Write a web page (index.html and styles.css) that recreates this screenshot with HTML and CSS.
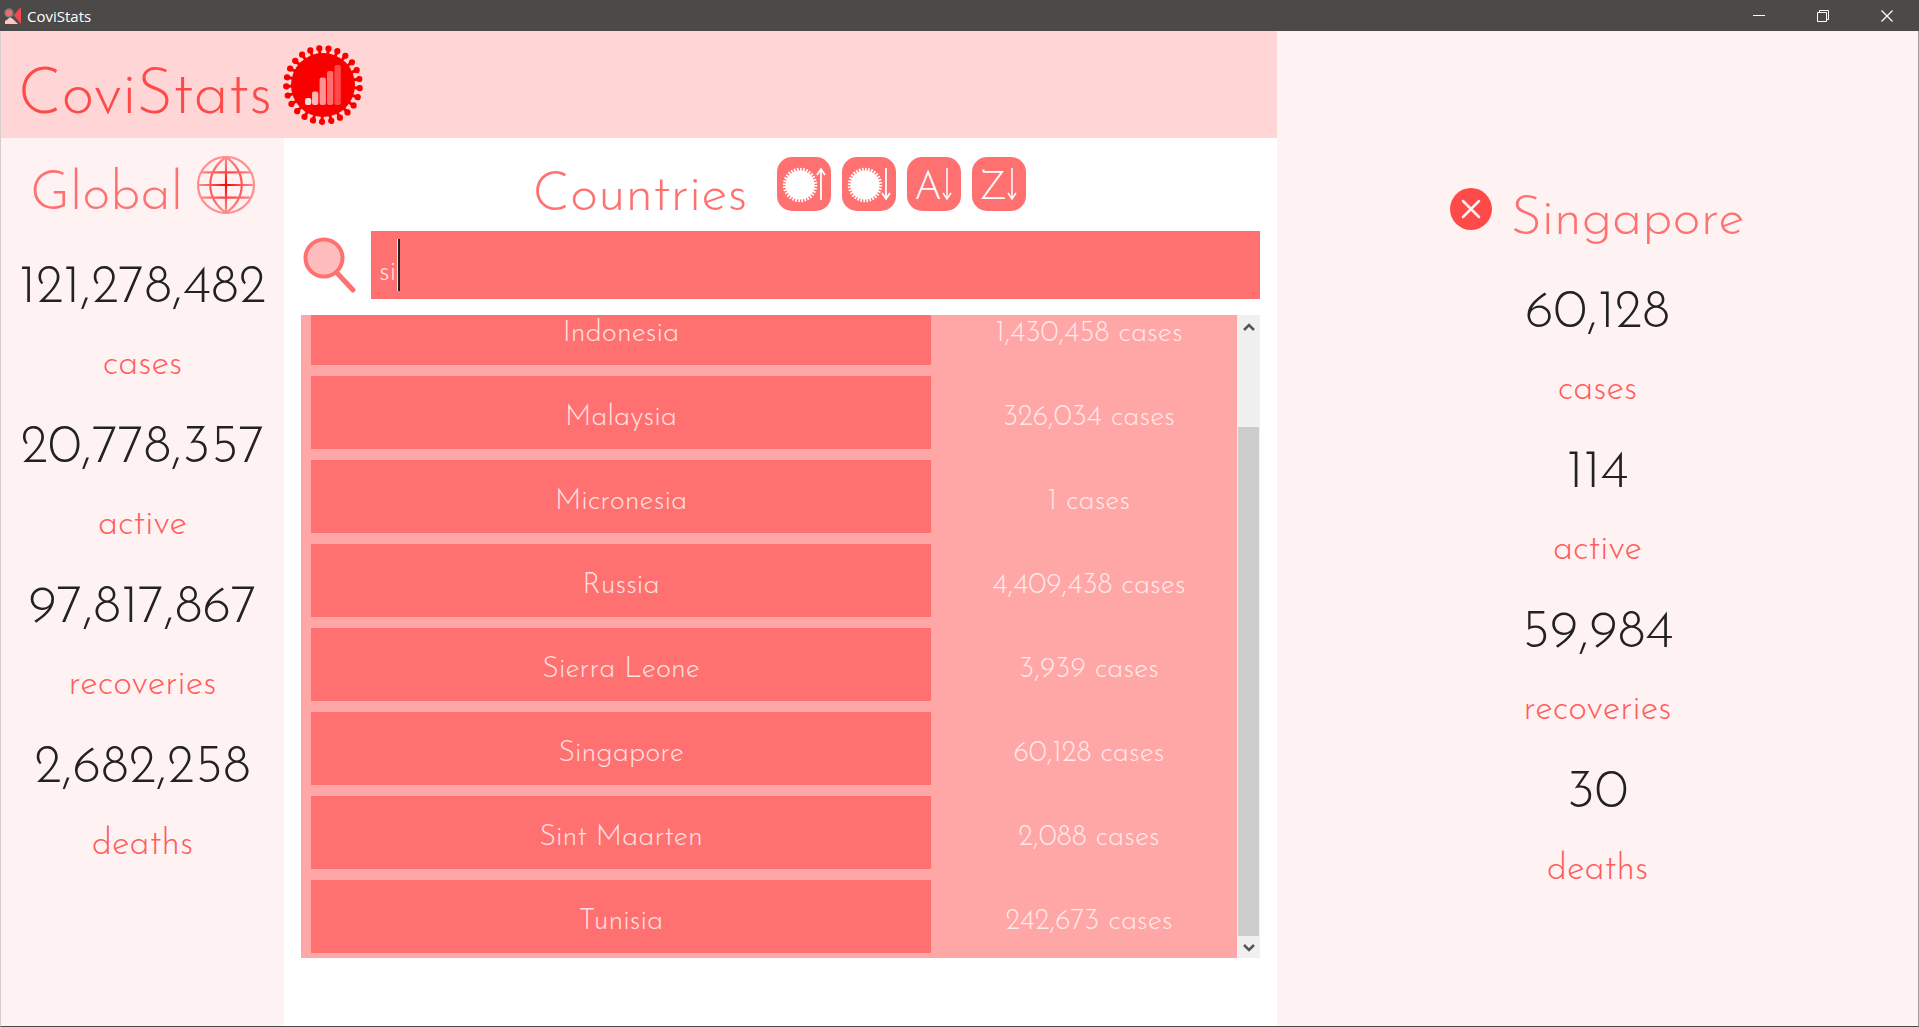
FILE: index.html
```html
<!DOCTYPE html>
<html lang="en">
<head>
<meta charset="utf-8">
<title>CoviStats</title>
<link rel="stylesheet" href="styles.css">
</head>
<body>
<div class="titlebar">
  <svg class="app-icon" width="18" height="18" viewBox="0 0 18 18" aria-hidden="true">
    <path d="M17 0v17L9 9z" fill="#f04a50"/><path d="M1 17v-3l3-2 2-2 3 2 5 5z" fill="#ffc4c4"/>
    <path d="M8 8l7 8" stroke="#5a4a4a" stroke-width="2"/>
    <circle cx="5" cy="6" r="4" fill="#f06c70" stroke="#5c8583" stroke-width="1.5"/>
  </svg>
  <span class="app-name">CoviStats</span>
  <div class="window-buttons">
    <button type="button" aria-label="Minimize"><svg width="12" height="12"><path d="M0 5.5h12" stroke="#fff"/></svg></button>
    <button type="button" aria-label="Restore"><svg width="12" height="12" fill="none" stroke="#fff"><path d="M.5 2.500h9v9h-9zM2.500 2.500v-2h9v9h-2"/></svg></button>
    <button type="button" aria-label="Close"><svg width="12" height="12"><path d="M.5.5l11 11M11.500.5l-11 11" stroke="#fff" stroke-width="1.3"/></svg></button>
  </div>
</div>
<div class="app">
  <header class="brand">
    <h1>CoviStats</h1>
    <svg width="80" height="80" viewBox="0 0 80 80" aria-hidden="true">
      <g transform="rotate(5 40 40)" fill="none" stroke="#f80000">
        <circle cx="40" cy="40" r="36.800" stroke-width="6.200" stroke-linecap="round" pathLength="25" stroke-dasharray="0 1"/>
        <circle cx="40" cy="40" r="33" stroke-width="6" pathLength="25" stroke-dasharray=".36 .64" stroke-dashoffset=".18"/>
      </g>
      <circle cx="40" cy="40" r="32" fill="#f80000"/>
      <rect x="22" y="53" width="6.300" height="7" rx="2" fill="#ffdada"/>
      <rect x="29" y="46.500" width="6.300" height="13.500" rx="2" fill="#ffb6b6"/>
      <rect x="36.600" y="32.500" width="6.300" height="27.500" rx="2" fill="#ff9292"/>
      <rect x="44" y="26" width="6.300" height="34" rx="2" fill="#ff6e6e"/>
      <rect x="51.500" y="20" width="6.300" height="40" rx="2" fill="#ff4848"/>
    </svg>
  </header>

  <aside class="panel global">
    <div class="panel-heading">
      <h2>Global</h2>
      <svg width="58" height="58" viewBox="0 0 58 58" fill="none" stroke="url(#globe)" stroke-width="2.200" aria-hidden="true">
        <defs><radialGradient id="globe" gradientUnits="userSpaceOnUse" cx="29" cy="29" r="29"><stop offset="0" stop-color="#f00"/><stop offset=".6" stop-color="#ff6262"/><stop offset="1" stop-color="#ff9494"/></radialGradient></defs>
        <circle cx="29" cy="29" r="28"/>
        <path d="M29 1v56M1 29h56M5 16.300h48M5 41.700h48M29 1C8 16 8 42 29 57M29 1c21 15 21 41 0 56"/>
      </svg>
    </div>
    <dl class="stats">
      <div><dd>121,278,482</dd><dt>cases</dt></div>
      <div><dd>20,778,357</dd><dt>active</dt></div>
      <div><dd>97,817,867</dd><dt>recoveries</dt></div>
      <div><dd>2,682,258</dd><dt>deaths</dt></div>
    </dl>
  </aside>

  <main class="countries">
    <div class="countries-heading">
      <h2>Countries</h2>
      <div class="sorts">
        <button type="button" aria-label="Sort by cases, ascending"><svg width="54" height="54" fill="none" stroke="#fff"><circle cx="23" cy="28" r="14.500" fill="#fff" stroke="none"/><circle cx="23" cy="28" r="15.200" stroke-width="4" pathLength="32" stroke-dasharray=".55 .45"/><path d="M44 43V12M40 18l4-6 4 6" stroke-width="1.800"/></svg></button>
        <button type="button" aria-label="Sort by cases, descending"><svg width="54" height="54" fill="none" stroke="#fff"><circle cx="23" cy="28" r="14.500" fill="#fff" stroke="none"/><circle cx="23" cy="28" r="15.200" stroke-width="4" pathLength="32" stroke-dasharray=".55 .45"/><path d="M44 11v31M40 36l4 6 4-6" stroke-width="1.800"/></svg></button>
        <button type="button" aria-label="Sort A to Z"><svg width="54" height="54"><text x="21" y="42" text-anchor="middle" class="sort-letter">A</text><path d="M40 11v31M36 36l4 6 4-6" fill="none" stroke="#fff" stroke-width="1.500"/></svg></button>
        <button type="button" aria-label="Sort Z to A"><svg width="54" height="54"><text x="21" y="42" text-anchor="middle" class="sort-letter">Z</text><path d="M40 11v31M36 36l4 6 4-6" fill="none" stroke="#fff" stroke-width="1.500"/></svg></button>
      </div>
    </div>
    <div class="search">
      <label for="query" aria-label="Search countries">
        <svg width="54" height="56" viewBox="0 0 54 56"><path d="M34 36l16 17" stroke="#ff7171" stroke-width="5" stroke-linecap="round"/><circle cx="21" cy="21" r="18.500" fill="#ffbcbc" stroke="#ff7171" stroke-width="4"/></svg>
      </label>
      <div class="field">
        <input id="query" type="text" value="si" autocomplete="off">
        <span class="caret"></span>
      </div>
    </div>
    <div class="results">
      <ul class="rows">
        <li><button type="button">Indonesia</button><span>1,430,458 cases</span></li>
        <li><button type="button">Malaysia</button><span>326,034 cases</span></li>
        <li><button type="button">Micronesia</button><span>1 cases</span></li>
        <li><button type="button">Russia</button><span>4,409,438 cases</span></li>
        <li><button type="button">Sierra Leone</button><span>3,939 cases</span></li>
        <li><button type="button">Singapore</button><span>60,128 cases</span></li>
        <li><button type="button">Sint Maarten</button><span>2,088 cases</span></li>
        <li><button type="button">Tunisia</button><span>242,673 cases</span></li>
      </ul>
      <div class="scrollbar" aria-hidden="true">
        <svg width="22" height="22"><path d="M6 15l5-5 5 5" fill="none" stroke="#555" stroke-width="2.500"/></svg>
        <div class="track"><div class="thumb"></div></div>
        <svg width="22" height="22"><path d="M6 9l5 5 5-5" fill="none" stroke="#555" stroke-width="2.500"/></svg>
      </div>
    </div>
  </main>

  <aside class="panel detail">
    <div class="panel-heading">
      <button type="button" class="close" aria-label="Close country"><svg width="42" height="42"><circle cx="21" cy="21" r="21" fill="#ff4a4a"/><path d="M13 13l16 16M29 13L13 29" stroke="#fff2f2" stroke-width="2.500" stroke-linecap="round"/></svg></button>
      <h2>Singapore</h2>
    </div>
    <dl class="stats">
      <div><dd>60,128</dd><dt>cases</dt></div>
      <div><dd>114</dd><dt>active</dt></div>
      <div><dd>59,984</dd><dt>recoveries</dt></div>
      <div><dd>30</dd><dt>deaths</dt></div>
    </dl>
  </aside>
</div>
</body>
</html>
```

FILE: styles.css
```css
* { box-sizing: border-box; }

body {
  margin: 0;
  min-height: 100vh;
  display: flex;
  flex-direction: column;
  font-family: "Josefin Sans", Lato, sans-serif;
  font-weight: 300;
  color: #222;
  background: #fff;
}

h1, h2, dl, dd, ul { margin: 0; padding: 0; font-weight: 300; }
svg { display: block; }
button { border: 0; padding: 0; background: none; font: inherit; cursor: pointer; }

/* window title bar */
.titlebar {
  height: 31px;
  display: flex;
  align-items: center;
  gap: 5px;
  padding-left: 4px;
  background: #4c4a48;
  color: #fff;
}
.app-name { font: 400 15px/20px "Open Sans", sans-serif; }
.window-buttons { margin-left: auto; display: flex; }
.window-buttons button { width: 64px; height: 30px; display: grid; place-items: center; }

/* page grid */
.app {
  flex: 1;
  display: grid;
  grid-template-columns: 283fr 993fr 641fr;
  grid-template-rows: auto 1fr;
  border: 1px solid #d8cccc;
  border-top: 0;
  border-bottom-color: #4c4a48;
  border-right-color: #a39a9a;
}

.brand {
  grid-column: 1 / 3;
  display: flex;
  align-items: center;
  gap: 11px;
  min-height: 107px;
  padding-left: 17px;
  background: #ffd5d5;
  color: #ff4a4a;
}
.brand h1 { padding-top: 27px; font-size: 63px; line-height: 76px; }

h2 { padding-top: 8px; font-size: 54px; line-height: 64px; color: #ff7171; }

.panel { background: #fff2f2; }
.global { padding-top: 18px; }
.detail { grid-column: 3; grid-row: 1 / 3; padding-top: 150px; }

.panel-heading { display: flex; justify-content: center; gap: 14px; }
.detail .panel-heading { gap: 18px; }
.close { align-self: flex-start; margin-top: 7px; }

.stats { padding-top: 29px; text-align: center; }
.stats div { display: flex; flex-direction: column; gap: 12px; margin-bottom: 20px; }
.stats dd { font-size: 54px; line-height: 64px; }
.stats dt { font-size: 36px; line-height: 64px; color: #ff5c5c; }

.countries {
  display: flex;
  flex-direction: column;
  padding: 19px 17px 68px;
}
.countries-heading { display: flex; justify-content: center; gap: 30px; margin-bottom: 2px; padding-right: 2px; }
.sorts { display: flex; gap: 11px; }
.sorts button { width: 54px; height: 54px; border-radius: 15px; background: #ff7171; }
.sort-letter { font-size: 40px; fill: #fff; }

.search { display: flex; align-items: center; gap: 14px; margin-bottom: 16px; }
.search label { width: 56px; padding-left: 2px; }
.field { flex: 1; position: relative; }
.field input {
  display: block;
  width: 100%;
  height: 68px;
  border: 0;
  border-radius: 0;
  padding: 14px 8px 0;
  background: #ff7171;
  color: #ffe3e3;
  font: inherit;
  font-size: 29px;
  outline: 0;
}
.caret {
  position: absolute;
  left: 27px;
  top: 8px;
  width: 2px;
  height: 52px;
  background: #222;
  box-shadow: -1px 0 #ffdede;
}

/* list scrolled to its end */
.results { flex: 1 1 0; min-height: 0; display: flex; overflow: hidden; }
.rows {
  flex: 1;
  min-height: 0;
  display: flex;
  flex-direction: column;
  justify-content: flex-end;
  gap: 11px;
  padding: 0 0 5px 10px;
  overflow: hidden;
  background: #ffa6a6;
  list-style: none;
  font-size: 29px;
}
.rows li {
  flex: none;
  height: 73px;
  display: grid;
  grid-template-columns: 620fr 306fr;
  grid-template-rows: 100%;
  color: #ffe9e9;
  text-align: center;
}
.rows button { background: #ff7171; color: #ffe0e0; padding-top: 10px; }
.rows span { line-height: 73px; padding: 5px 0 0 10px; }

.scrollbar {
  width: 23px;
  display: flex;
  flex-direction: column;
  padding: 0 1px;
  background: #f0f0f0;
}
.track { flex: 1; display: flex; flex-direction: column; justify-content: flex-end; }
.thumb { height: 85%; background: #cdcdcd; }
```
